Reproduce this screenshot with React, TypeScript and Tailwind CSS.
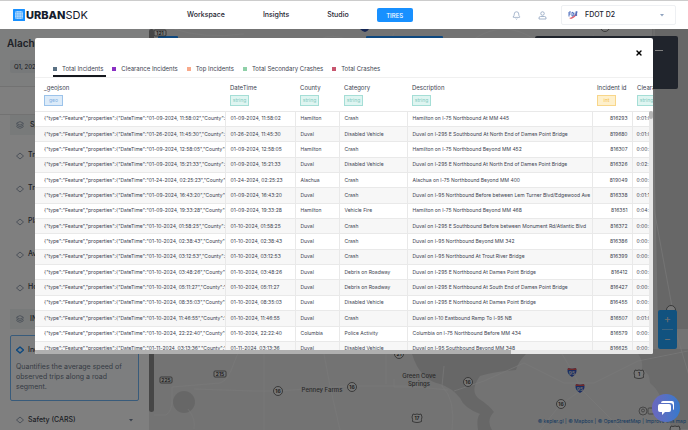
import React, { useState } from 'react';
import { Bell, Layers, X } from 'lucide-react';

interface Incident {
  date: string;
  county: string;
  category: string;
  description: string;
  id: number;
  clearance: string;
}

const incidents: Incident[] = [
  { date: '01-09-2024, 11:58:02', county: 'Hamilton', category: 'Crash', description: 'Hamilton on I-75 Northbound At MM 445', id: 816293, clearance: '0:01:0' },
  { date: '01-26-2024, 11:45:30', county: 'Duval', category: 'Disabled Vehicle', description: 'Duval on I-295 E Southbound At North End of Dames Point Bridge', id: 819680, clearance: '0:01:0' },
  { date: '01-09-2024, 12:58:05', county: 'Hamilton', category: 'Crash', description: 'Hamilton on I-75 Northbound Beyond MM 452', id: 816307, clearance: '0:00:' },
  { date: '01-09-2024, 15:21:33', county: 'Duval', category: 'Disabled Vehicle', description: 'Duval on I-295 E Northbound At North End of Dames Point Bridge', id: 816326, clearance: '0:02:' },
  { date: '01-24-2024, 02:25:23', county: 'Alachua', category: 'Crash', description: 'Alachua on I-75 Northbound Beyond MM 400', id: 819049, clearance: '0:00:' },
  { date: '01-09-2024, 16:43:20', county: 'Duval', category: 'Crash', description: 'Duval on I-95 Northbound Before between Lem Turner Blvd/Edgewood Ave', id: 816338, clearance: '0:01:1' },
  { date: '01-09-2024, 19:33:28', county: 'Hamilton', category: 'Vehicle Fire', description: 'Hamilton on I-75 Northbound Beyond MM 468', id: 816351, clearance: '0:04:' },
  { date: '01-10-2024, 01:58:25', county: 'Duval', category: 'Crash', description: 'Duval on I-295 E Southbound Before between Monument Rd/Atlantic Blvd', id: 816372, clearance: '0:00:' },
  { date: '01-10-2024, 02:38:43', county: 'Duval', category: 'Crash', description: 'Duval on I-95 Northbound Beyond MM 342', id: 816386, clearance: '0:00:' },
  { date: '01-10-2024, 03:12:53', county: 'Duval', category: 'Crash', description: 'Duval on I-95 Northbound At Trout River Bridge', id: 816399, clearance: '0:00:' },
  { date: '01-10-2024, 03:48:26', county: 'Duval', category: 'Debris on Roadway', description: 'Duval on I-295 E Northbound At Dames Point Bridge', id: 816412, clearance: '0:00:' },
  { date: '01-10-2024, 05:11:27', county: 'Duval', category: 'Debris on Roadway', description: 'Duval on I-295 E Northbound At South End of Dames Point Bridge', id: 816427, clearance: '0:00:' },
  { date: '01-10-2024, 08:35:03', county: 'Duval', category: 'Disabled Vehicle', description: 'Duval on I-295 E Northbound At Dames Point Bridge', id: 816455, clearance: '0:00:' },
  { date: '01-10-2024, 11:46:55', county: 'Duval', category: 'Crash', description: 'Duval on I-10 Eastbound Ramp To I-95 NB', id: 816507, clearance: '0:01:0' },
  { date: '01-10-2024, 22:22:40', county: 'Columbia', category: 'Police Activity', description: 'Columbia on I-75 Northbound Before MM 434', id: 816579, clearance: '0:00:' },
  { date: '01-11-2024, 03:13:36', county: 'Duval', category: 'Disabled Vehicle', description: 'Duval on I-95 Southbound Beyond MM 348', id: 816625, clearance: '0:00:' },
];

const tabs = [
  { name: 'Total Incidents', color: 'bg-[#5a7184]' },
  { name: 'Clearance Incidents', color: 'bg-[#8a2fc4]' },
  { name: 'Top Incidents', color: 'bg-[#f8a98a]' },
  { name: 'Total Secondary Crashes', color: 'bg-[#8fd0a8]' },
  { name: 'Total Crashes', color: 'bg-[#c8566f]' },
];

const tagStyles = {
  geo: 'border-[#9cc3ea] bg-[#dcebf9] text-[#7fb0e2]',
  string: 'border-[#a5ded6] bg-[#dff5f1] text-[#7fcabf]',
  int: 'border-[#f8d68a] bg-[#fef0cc] text-[#f5c04a]',
};

const columns: { name: string; type: keyof typeof tagStyles; width: string }[] = [
  { name: '_geojson', type: 'geo', width: 'w-[190px]' },
  { name: 'DateTime', type: 'string', width: 'w-[70px]' },
  { name: 'County', type: 'string', width: 'w-[44px]' },
  { name: 'Category', type: 'string', width: 'w-[68px]' },
  { name: 'Description', type: 'string', width: 'w-[185px]' },
  { name: 'Incident id', type: 'int', width: 'w-[40px]' },
  { name: 'Clearance', type: 'string', width: '' },
];

const Header: React.FC = () => (
  <header className="flex h-[29px] shrink-0 items-center border-t border-[#cccccc] bg-white pr-3 pl-[13px] text-[7px] font-medium text-[#1d2330]">
    <a href="#" className="flex w-[174px] items-center text-[11px] text-[#15202e]">
      <svg viewBox="0 0 12 12" className="mr-px h-3 w-3">
        <rect width="12" height="12" rx="0.5" fill="#1890ff" />
        <rect x="2" y="2" width="8" height="8" rx="1.5" fill="#a9d5ff" />
        <path d="M3.5 2v8M6 2v8M8.5 2v8M2 3.5h8M2 6h8M2 8.5h8" stroke="#5eb0fb" strokeWidth="0.5" />
      </svg>
      <span className="font-extrabold">URBAN</span>
      <span className="font-normal">SDK</span>
    </a>
    <nav className="flex items-center">
      <a href="#" className="mr-[38px]">Workspace</a>
      <a href="#" className="mr-[38px]">Insights</a>
      <a href="#" className="mr-[28px]">Studio</a>
      <button className="h-[14px] w-9 rounded-xs bg-[#1890ff] text-[6px] text-white">TIRES</button>
    </nav>
    <div className="ml-auto flex items-center">
      <button aria-label="Notifications" className="mr-[17px] text-[#8fa3bf]"><Bell className="h-[9px] w-[9px]" /></button>
      <button aria-label="Account" className="mr-[14px] text-[#8fa3bf]">
        <svg viewBox="0 0 18 18" className="h-[9px] w-[9px]" fill="none" stroke="currentColor" strokeWidth="1.6">
          <circle cx="9" cy="5" r="3.5" />
          <path d="M2 16v-2q0-3 3-3h8q3 0 3 3v2Z" />
        </svg>
      </button>
      <div className="relative flex h-5 w-[115px] items-center rounded-xs border border-[#eef0f3] pl-1.5">
        <svg viewBox="0 0 10 10" className="h-2.5 w-2.5 shrink-0">
          <path d="M1 8Q5 7.500 9 2.500Q8 7.500 3 9Z" fill="#e0606c" />
          <path d="M1 6.500V2h2M1 4h1.700M4 2.200v4M4 2.200q1.800 0 1.800 2t-1.800 2M7.200 2.500v3.500M8.600 1.500v4.500M7.500 2h2" stroke="#3a5fb5" strokeWidth="0.9" fill="none" />
        </svg>
        <select aria-label="Organization" className="h-full w-full appearance-none bg-transparent pl-[7px] text-[7px] outline-none">
          <option>FDOT D2</option>
        </select>
        <svg viewBox="0 0 4 3" className="pointer-events-none absolute right-[11px] h-[3px] w-1"><path d="M0 0h4L2 2.5Z" fill="#8fa3bf" /></svg>
      </div>
    </div>
  </header>
);

const DiamondIcon: React.FC<{ className: string }> = ({ className }) => (
  <svg viewBox="0 0 16 16" className={`mr-1 h-2 w-2 shrink-0 ${className}`} fill="none" stroke="currentColor" strokeLinejoin="round">
    <path d="M1 8l7-6 7 6-7 6Z" />
  </svg>
);

const metrics = ['Travel Time', 'Traffic Volume', 'Planning Time', 'Average Speed', 'Hours of Delay'];

const Sidebar: React.FC = () => (
  <aside className="flex w-[154px] shrink-0 overflow-hidden bg-white text-[7px] font-medium text-[#3b424d]">
    <div className="flex min-w-0 flex-1 flex-col">
      <div className="h-[58px] shrink-0 border-b border-[#e4e4e4] bg-[#fbfcfc] px-[7px] pt-2">
        <h1 className="text-[10px] leading-3 font-semibold">Alachua</h1>
        <button className="mt-[11px] ml-[3px] block h-[13px] rounded-xs bg-[#eef2f4] px-1 text-[6px] leading-[13px]">Q1, 2024</button>
      </div>
      <div className="h-7 shrink-0 border-b border-[#e4e4e4]" />
      <div className="flex shrink-0 flex-col px-2.5">
        <div className="flex h-5 items-center bg-[#f0f4f4] px-1.5">
          <Layers className="mr-1.5 h-2 w-2 text-[#74839a]" />
          Speed
        </div>
        <div className="mt-1 mb-[5px]">
          {metrics.map(metric => (
            <div key={metric} className="flex h-[33px] items-center px-1.5">
              <DiamondIcon className="stroke-[1.5] text-[#74839a]" />
              {metric}
            </div>
          ))}
        </div>
        <div className="flex h-5 items-center bg-[#f0f4f4] px-1.5">
          <Layers className="mr-1.5 h-2 w-2 text-[#74839a]" />
          INRIX
        </div>
        <div className="mt-1.5 h-[66px] rounded-xs border border-[#71b7f7] bg-[#fbfdff] px-[5px] pt-[9px]">
          <div className="flex h-[10px] items-center">
            <DiamondIcon className="stroke-[3] text-[#1890ff]" />
            Index
          </div>
          <p className="mt-[7px] leading-[10px] font-normal text-[#6d7889]">Quantifies the average speed of observed trips along a road segment.</p>
        </div>
        <div className="flex h-[38px] items-center px-1.5">
          <DiamondIcon className="stroke-[1.5] text-[#74839a]" />
          Safety (CARS)
          <svg viewBox="0 0 4 3" className="ml-auto h-[3px] w-1"><path d="M0 0h4L2 2.5Z" fill="#74839a" /></svg>
        </div>
      </div>
    </div>
    <div className="w-[5px] bg-[#e6e6e6]">
      <div className="h-[383px] rounded-full bg-[#8d8d8d]" />
    </div>
  </aside>
);

const circles = [
  { x: 124, y: 362, label: '16' },
  { x: 198, y: 358, label: '16' },
  { x: 245, y: 325, label: '21' },
  { x: 314, y: 353, label: '16' },
  { x: 407, y: 375, label: '16' },
  { x: 451, y: -2, label: '' },
  { x: 517, y: 281, label: '' },
];

const signs = [
  { x: 6, y: 4, label: '121' },
  { x: 12, y: 351, label: '225' },
  { x: 66, y: 345, label: '215' },
];

const shields = [
  { x: 263, y: 389, label: '17' },
  { x: 485, y: 345, label: '1' },
  { x: 521, y: 401, label: '' },
];

const interstates = [
  { x: 418, y: 343 },
  { x: 426, y: 359 },
];

const MapCanvas: React.FC = () => (
  <svg viewBox="0 0 534 401" preserveAspectRatio="xMinYMin slice" className="absolute inset-0 h-full w-full">
    <rect width="534" height="401" fill="#e7e7e7" />
    <g fill="#cfcfcf">
      <path d="M255 325h114q-8 8-10 16q-22 2-36 6q-10 14-2 22q12 8 16 14q-8 8-2 18h-14q-2-12 2-16q-16-6-20-16q-8-10-20-14q-20-4-28-30Z" transform="translate(3 0)" />
      <path d="M498 0h36v300h-30Z" />
      <path d="M480 320q10 10 8 20q8 4 8 14q10 8 14 24l8 22h16v-80Z" opacity="0.7" />
      <circle cx="30" cy="373" r="11" />
    </g>
    <g fill="none" stroke="#f2f2f2" strokeWidth="0.7">
      <path d="M0 386h12q6-4 6-14v-14l48-4q8-2 14-20l4-10" />
      <path d="M40 360l60 2h24l70-5h60l40 4" />
      <path d="M110 325v76M170 325l6 32 10 44M232 325v30M298 401q4-30-10-44l2-20" />
      <path d="M300 362l30-10 40-18 40 20 30 0 44-22 50-10" />
      <path d="M408 325l12 20 8 16 40 40M426 362l-20 14-20 25" />
      <path d="M500 0v180l24 130 12 40" />
      <path d="M150 26q20-30 50-12t40-10M320 10q30-20 60 0t60-4M20 0q30 10 70 5" />
      <path d="M34 380q8 10 6 20M240 350v8h22v-8" strokeWidth="0.6" />
    </g>
    <rect x="4" y="7" width="20" height="10" rx="1" fill="#1c90ff" />
    <rect x="212" y="7" width="77" height="10" rx="1" fill="#1c90ff" />
    <path d="M206 0h9q-2 3-4 3t-5-3Z" fill="#2c4fa8" />
    <g fontSize="5" fontWeight="600" textAnchor="middle">
      {circles.map(c => (
        <g key={`${c.x}-${c.y}`}>
          <circle cx={c.x} cy={c.y} r="4.500" fill="#eeeeee" stroke="#555555" strokeWidth="0.8" />
          <text x={c.x} y={c.y + 2} fill="#333333">{c.label}</text>
        </g>
      ))}
      {signs.map(s => (
        <g key={s.label}>
          <rect x={s.x - 6} y={s.y - 3} width="12" height="6" rx="1" fill="#eeeeee" stroke="#555555" strokeWidth="0.8" />
          <text x={s.x} y={s.y + 2} fill="#333333">{s.label}</text>
        </g>
      ))}
      {shields.map(s => (
        <g key={s.x} transform={`translate(${s.x} ${s.y})`}>
          <path d="M-4-4q2 1 4 0q2 1 4 0l1 3q-1 3-.5 4.500q-2.500 1-4.500 1t-4.500-1q.5-1.500-.5-4.500Z" fill="#eeeeee" stroke="#555555" strokeWidth="0.8" />
          <text y="2" fill="#333333">{s.label}</text>
        </g>
      ))}
      {interstates.map(i => (
        <g key={i.y} transform={`translate(${i.x} ${i.y})`}>
          <path d="M-4-4q4 1.500 8 0q2 6-4 9q-6-3-4-9Z" fill="#3558c4" />
          <path d="M-4-4q4 1.500 8 0l.5 2h-9Z" fill="#e05252" />
          <text y="3" fill="#e7e7e7">95</text>
        </g>
      ))}
    </g>
    <g fill="#555555" fontSize="6" fontWeight="500" textAnchor="middle">
      <text x="168" y="363">Penney Farms</text>
      <text x="265" y="349">Green Cove</text>
      <text x="265" y="357">Springs</text>
    </g>
    <g fill="none" stroke="#777777" strokeWidth="0.8">
      <circle cx="489" cy="382" r="4" />
      <circle cx="489" cy="381.500" r="1.500" />
      <rect x="494" y="379" width="6" height="6" rx="1" />
    </g>
  </svg>
);

const MapView: React.FC = () => (
  <main className="relative min-w-0 flex-1 overflow-hidden">
    <MapCanvas />
    <div className="absolute top-[7px] right-2.5 h-[53px] w-[143px] rounded-xs bg-[#414859]">
      <div className="absolute top-3.5 right-[15px] h-px w-2 bg-white" />
    </div>
    <div className="absolute top-[281px] right-[11px] flex h-[39px] w-[19px] flex-col rounded-xs bg-[#22a4ff] text-[11px] leading-[19px] text-[#dddddd]">
      <button aria-label="Zoom in" className="flex-1">+</button>
      <div className="mx-1 h-px bg-white/40" />
      <button aria-label="Zoom out" className="flex-1">−</button>
    </div>
    <div className="absolute right-0.5 bottom-[5px] text-[5px] leading-2 whitespace-nowrap text-[#1c6fc0]">
      <a href="#">© kepler.gl</a> | <a href="#">© Mapbox</a> | <a href="#">© OpenStreetMap</a> | <a href="#">Improve this map</a>
    </div>
  </main>
);

const IncidentsModal: React.FC = () => {
  const [activeTab, setActiveTab] = useState('Total Incidents');

  return (
    <div role="dialog" aria-label="Incidents" className="flex h-[316px] w-full flex-col overflow-hidden rounded-xs bg-white text-[#3c4350]">
      <div className="flex h-[22px] shrink-0 items-end justify-end pr-2.5">
        <button aria-label="Close" className="mb-[3px] text-black"><X className="h-2 w-2" strokeWidth={4} /></button>
      </div>
      <div role="tablist" className="flex h-[18px] shrink-0 items-stretch gap-1.5 border-b border-[#f0f0f0] px-[18px] text-[6px]">
        {tabs.map(tab => (
          <button
            key={tab.name}
            role="tab"
            aria-selected={activeTab === tab.name}
            onClick={() => setActiveTab(tab.name)}
            className={`flex items-center gap-[5px] border-b-2 pt-0.5 pr-[3px] whitespace-nowrap ${activeTab === tab.name ? 'border-[#15181e]' : 'border-transparent'}`}
          >
            <span className={`h-1 w-1 ${tab.color}`} />
            {tab.name}
          </button>
        ))}
      </div>
      <div className="relative min-h-0 flex-1 overflow-hidden">
        <table className="h-[278px] w-[110%] table-fixed border-collapse text-left text-[5px] leading-[7px]">
          <thead>
            <tr className="h-[33px]">
              {columns.map((col, i) => (
                <th key={col.name} className={`p-0 align-top font-normal whitespace-nowrap ${col.width} ${i === 0 ? 'pl-[9px]' : 'pl-[5px]'}`}>
                  <div className="mt-1.5 text-[6px] leading-2">{col.name}</div>
                  <span className={`mt-[3px] block h-[11px] w-[19px] border text-center leading-[9px] ${tagStyles[col.type]}`}>{col.type}</span>
                </th>
              ))}
            </tr>
          </thead>
          <tbody>
            {incidents.map(row => (
              <tr key={row.id} className="border-t border-[#e9e9e9] even:bg-[#f7f7f7]">
                <td className="border-r border-[#e9e9e9] p-0 pl-[9px]">
                  <div className="overflow-hidden whitespace-nowrap">
                    {`{"type":"Feature","properties":{"DateTime":"${row.date}","County":"${row.county}"`}
                  </div>
                </td>
                <td className="border-r border-[#e9e9e9] p-0 pl-[5px] whitespace-nowrap">{row.date}</td>
                <td className="border-r border-[#e9e9e9] p-0 pl-[5px] whitespace-nowrap">{row.county}</td>
                <td className="border-r border-[#e9e9e9] p-0 pl-[5px] whitespace-nowrap">{row.category}</td>
                <td className="border-r border-[#e9e9e9] p-0 pl-[5px] whitespace-nowrap">{row.description}</td>
                <td className="border-r border-[#e9e9e9] p-0 pr-1 text-right">{row.id}</td>
                <td className="p-0 pl-1 whitespace-nowrap">{row.clearance}</td>
              </tr>
            ))}
          </tbody>
        </table>
        <div className="absolute top-[33px] right-0 bottom-0 w-1 bg-[#e8e8e8]">
          <div className="h-2 rounded-full bg-[#b5b5b5]" />
        </div>
      </div>
      <div className="h-1 shrink-0 bg-[#e8e8e8]">
        <div className="h-full w-[77%] bg-[#b0b0b0]" />
      </div>
    </div>
  );
};

const App: React.FC = () => {
  return (
    <div className="relative flex h-screen flex-col overflow-hidden font-['Inter',sans-serif]">
      <Header />
      <div className="relative flex min-h-0 flex-1">
        <Sidebar />
        <MapView />
        <div className="absolute inset-0 bg-black/50 px-[35px] pt-[9px]">
          <IncidentsModal />
        </div>
      </div>
      <button aria-label="Open chat" className="absolute right-2 bottom-2 flex h-7 w-7 items-center justify-center rounded-full bg-linear-to-r from-[#6a68bd] to-[#3479cc]">
        <svg viewBox="0 0 16 14" className="h-3.5 w-4">
          <path d="M5 0h9q2 0 2 2v5q0 2-1 2V5q0-3-3-3H3q0-2 2-2Z" fill="white" />
          <path d="M2 3h9q2 0 2 2v4q0 2-2 2H7l-3 3v-3H2q-2 0-2-2V5q0-2 2-2Z" fill="white" />
        </svg>
      </button>
    </div>
  );
};

export default App;
